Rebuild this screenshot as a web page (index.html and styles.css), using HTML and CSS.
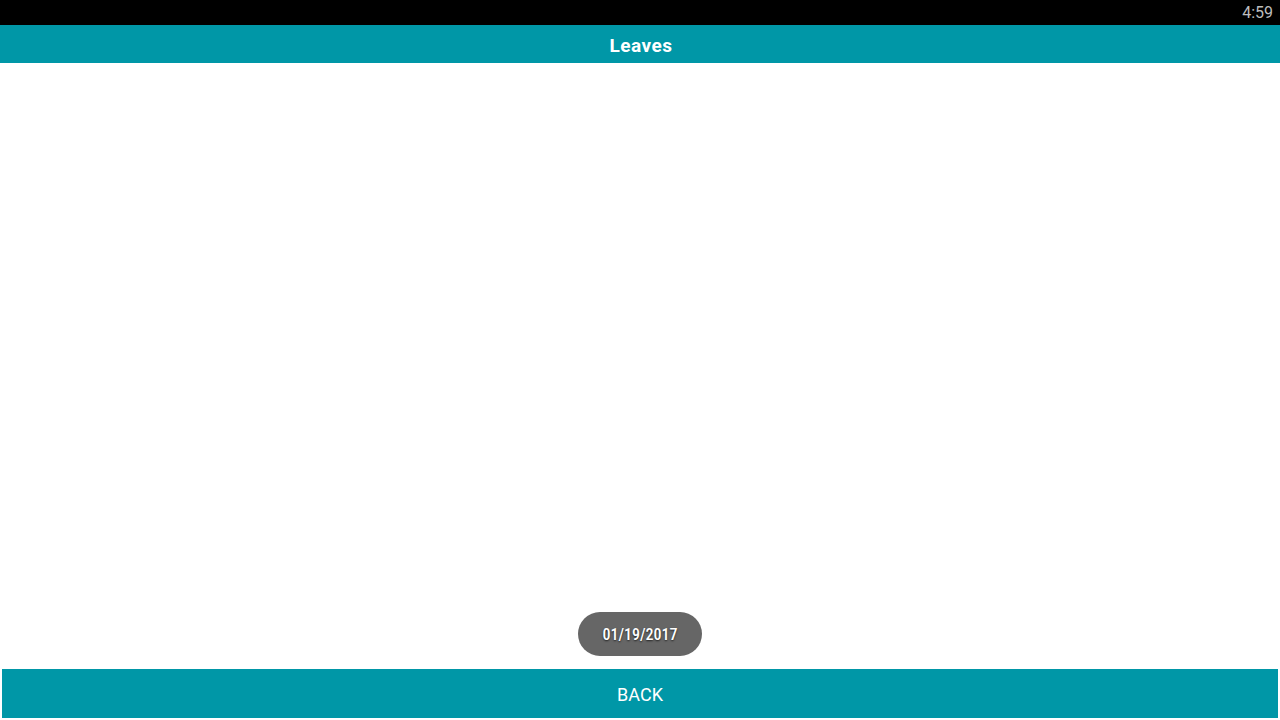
FILE: index.html
```html
<!DOCTYPE html>
<html>
<head>
<meta charset="utf-8">
<link rel="stylesheet" href="styles.css">
</head>
<body>
<div class="status-bar"><span class="clock">4:59</span></div>
<header class="app-bar"><h1 class="title">Leaves</h1></header>
<main class="content">
  <div class="toast">01/19/2017</div>
</main>
<footer class="footer"><button class="back-btn">BACK</button></footer>
</body>
</html>
```
FILE: styles.css
```css
html, body {
  margin: 0;
  padding: 0;
  width: 1280px;
  height: 720px;
  overflow: hidden;
  background: #ffffff;
  font-family: Roboto, "Noto Sans", sans-serif;
}
body {
  display: flex;
  flex-direction: column;
}
.status-bar {
  height: 25px;
  background: #000000;
  display: flex;
  justify-content: flex-end;
  align-items: center;
  padding-right: 7px;
}
.clock {
  color: #bdbdbd;
  font-size: 16px;
  line-height: 25px;
}
.app-bar {
  height: 38px;
  background: #0097a7;
  display: flex;
  align-items: center;
  justify-content: center;
}
.title {
  margin: 0 0 0 2px;
  color: #ffffff;
  font-size: 19px;
  font-weight: 700;
  letter-spacing: 0.5px;
  padding-top: 2px;
}
.content {
  flex: 1;
  display: flex;
  align-items: flex-end;
  justify-content: center;
  padding-bottom: 13px;
}
.toast {
  width: 124px;
  height: 44px;
  border-radius: 22px;
  background: #666666;
  color: #ffffff;
  font-size: 16px;
  font-weight: 500;
  font-stretch: condensed;
  display: flex;
  align-items: center;
  justify-content: center;
  text-shadow: 0 1px 2px rgba(0,0,0,0.7);
}
.footer {
  height: 49px;
  padding: 0 2px 2px;
  display: flex;
}
.back-btn {
  flex: 1;
  border: none;
  background: #0097a7;
  color: #ffffff;
  font-family: Roboto, "Noto Sans", sans-serif;
  font-size: 18px;
  font-weight: 400;
  padding: 2px 0 0;
  margin: 0;
}
```
